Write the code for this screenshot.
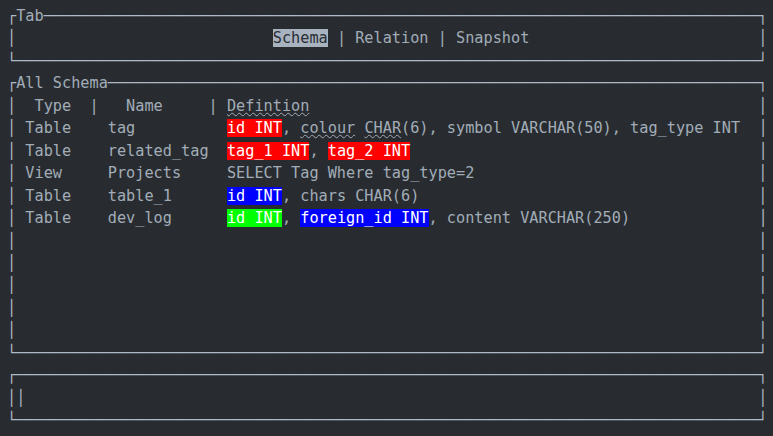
type Seg = { text: string; className?: string }

const INNER = 81

const red = 'bg-[#ff0000] text-white'
const blue = 'bg-[#0000ff] text-white'
const green = 'bg-[#00ff00] text-white'
const wavy = 'underline decoration-wavy decoration-[#a2acb8] decoration-1'

const rows: { kind: string; name: string; def: Seg[] }[] = [
  {
    kind: 'Table',
    name: 'tag',
    def: [
      { text: 'id INT', className: red },
      { text: ', ' },
      { text: 'colour', className: wavy },
      { text: ' ' },
      { text: 'CHAR', className: wavy },
      { text: '(6), symbol VARCHAR(50), tag_type INT' },
    ],
  },
  {
    kind: 'Table',
    name: 'related_tag',
    def: [
      { text: 'tag_1 INT', className: red },
      { text: ', ' },
      { text: 'tag_2 INT', className: red },
    ],
  },
  {
    kind: 'View',
    name: 'Projects',
    def: [{ text: 'SELECT Tag Where tag_type=2' }],
  },
  {
    kind: 'Table',
    name: 'table_1',
    def: [{ text: 'id INT', className: blue }, { text: ', chars CHAR(6)' }],
  },
  {
    kind: 'Table',
    name: 'dev_log',
    def: [
      { text: 'id INT', className: green },
      { text: ', ' },
      { text: 'foreign_id INT', className: blue },
      { text: ', content VARCHAR(250)' },
    ],
  },
]

function Top({ title = '' }: { title?: string }) {
  return (
    <div>
      <span className="text-[#b0bac7]">┌</span>
      {title}
      <span className="text-[#b0bac7]">
        {'─'.repeat(INNER - title.length)}┐
      </span>
    </div>
  )
}

function Bottom() {
  return <div className="text-[#b0bac7]">{'└' + '─'.repeat(INNER) + '┘'}</div>
}

function Line({ segs = [] }: { segs?: Seg[] }) {
  const used = segs.reduce((n, s) => n + s.text.length, 0)
  return (
    <div>
      <span className="text-[#b0bac7]">│</span>
      {segs.map((s, i) => (
        <span key={i} className={s.className}>
          {s.text}
        </span>
      ))}
      {' '.repeat(Math.max(0, INNER - used))}
      <span className="text-[#b0bac7]">│</span>
    </div>
  )
}

export default function App() {
  return (
    <div className="w-[773px] h-[436px] overflow-hidden bg-[#282c30] text-[#a2acb8] font-['DejaVu_Sans_Mono',monospace] text-[15.23px] leading-[22.45px] whitespace-pre pl-[7px] pt-[5px]">
      <Top title="Tab" />
      <Line
        segs={[
          { text: ' '.repeat(28) },
          { text: 'Schema', className: 'bg-[#a9b3c0] text-[#2a2e33]' },
          { text: ' | Relation | Snapshot' },
        ]}
      />
      <Bottom />

      <Top title="All Schema" />
      <Line
        segs={[
          { text: '  Type  |   Name     | ' },
          { text: 'Defintion', className: wavy },
        ]}
      />
      {rows.map((r) => (
        <Line
          key={r.name}
          segs={[{ text: ' ' + r.kind.padEnd(9) + r.name.padEnd(13) }, ...r.def]}
        />
      ))}
      <Line />
      <Line />
      <Line />
      <Line />
      <Line />
      <Bottom />

      <Top />
      <Line segs={[{ text: '│', className: 'text-[#b0bac7]' }]} />
      <Bottom />
    </div>
  )
}
